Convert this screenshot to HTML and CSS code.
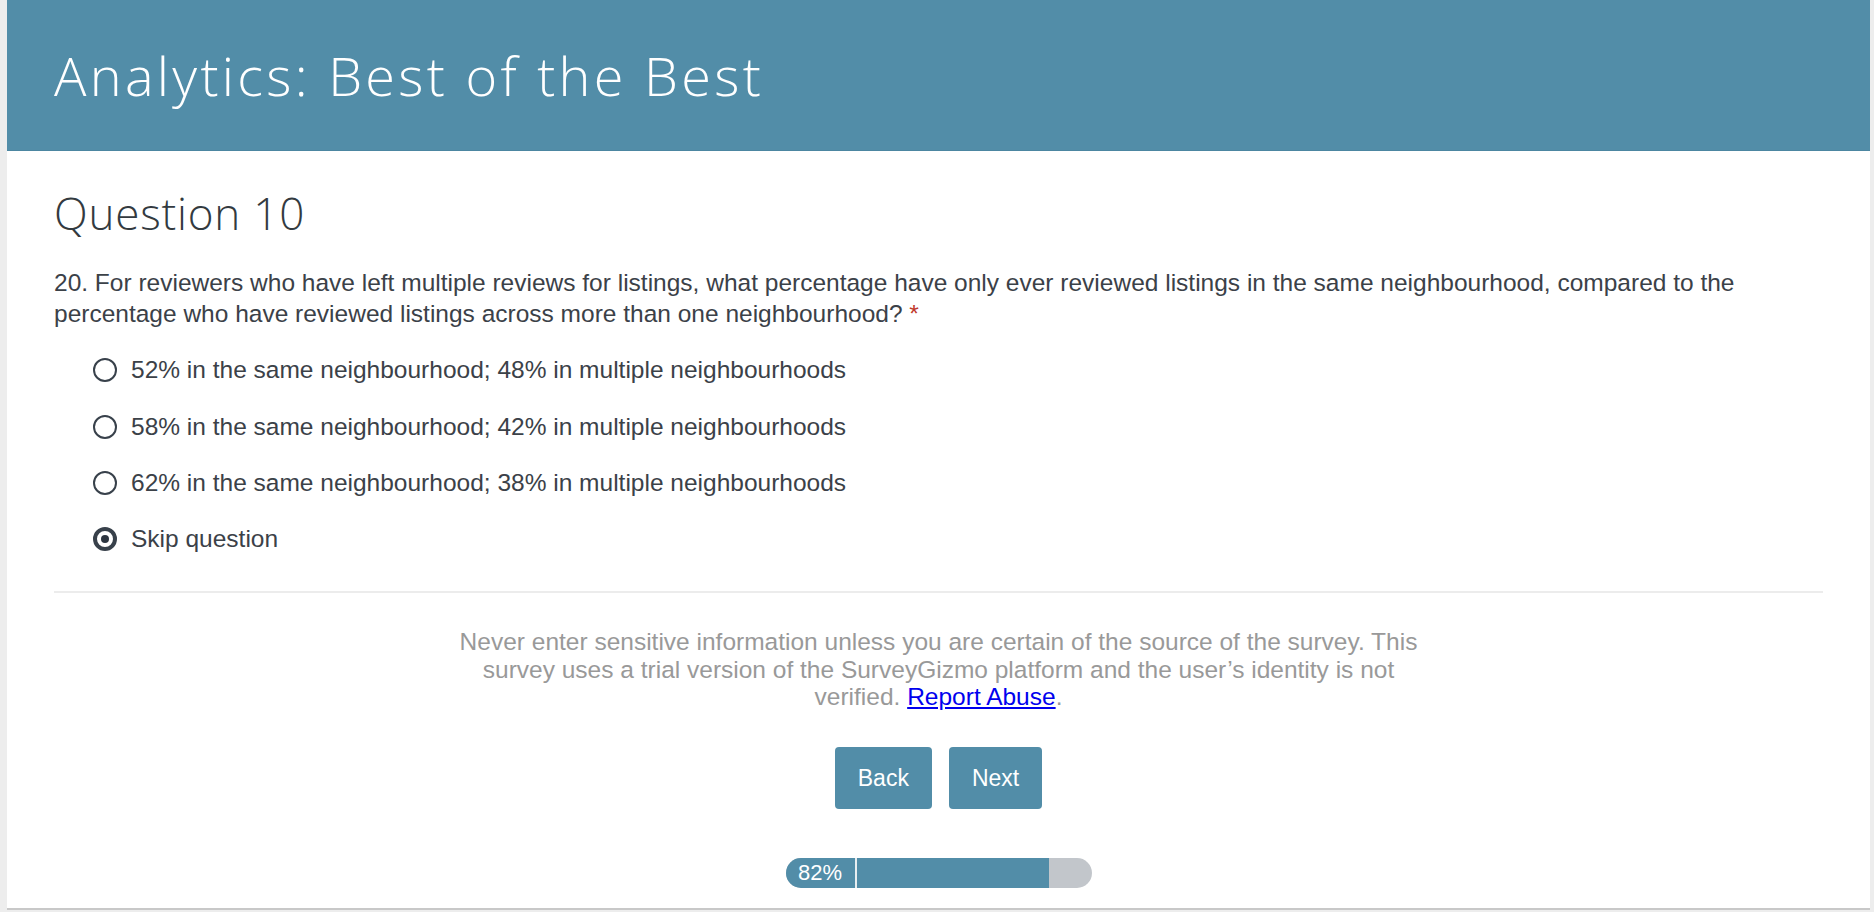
FILE: index.html
```html
<!DOCTYPE html>
<html lang="en">
<head>
<meta charset="utf-8">
<title>Analytics: Best of the Best</title>
<link rel="stylesheet" href="styles.css">
</head>
<body>
<div class="page">
  <header class="header">
    <h1 class="title">Analytics: Best of the Best</h1>
  </header>
  <main class="content">
    <h2 class="page-title">Question 10</h2>
    <p class="question">20. For reviewers who have left multiple reviews for listings, what percentage have only ever reviewed listings in the same neighbourhood, compared to the percentage who have reviewed listings across more than one neighbourhood? <span class="req">*</span></p>
    <ul class="options">
      <li class="option"><span class="radio"></span><span class="label">52% in the same neighbourhood; 48% in multiple neighbourhoods</span></li>
      <li class="option"><span class="radio"></span><span class="label">58% in the same neighbourhood; 42% in multiple neighbourhoods</span></li>
      <li class="option"><span class="radio"></span><span class="label">62% in the same neighbourhood; 38% in multiple neighbourhoods</span></li>
      <li class="option"><span class="radio checked"></span><span class="label">Skip question</span></li>
    </ul>
    <hr class="divider">
    <p class="notice">Never enter sensitive information unless you are certain of the source of the survey. This survey uses a trial version of the SurveyGizmo platform and the user’s identity is not verified. <a href="#" class="abuse">Report Abuse</a>.</p>
    <div class="actions">
      <button class="btn" type="button">Back</button>
      <button class="btn" type="button">Next</button>
    </div>
    <div class="progress">
      <span class="progress-label">82%</span>
      <span class="progress-track"><span class="progress-fill" style="width: 82%"></span></span>
    </div>
  </main>
</div>
</body>
</html>
```

FILE: styles.css
```css
html, body {
  margin: 0;
  padding: 0;
}
body {
  background: #ededed;
  font-family: "Liberation Sans", Arial, sans-serif;
  height: 912px;
  overflow: hidden;
}
.page {
  margin: 0 4px 0 7px;
  height: 910px;
  background: #fff;
  border-bottom: 2px solid #c8c8c8;
  box-sizing: border-box;
}
.header {
  height: 151px;
  background: #528da8;
  border-bottom: 1px solid #4c86a1;
  box-sizing: border-box;
  display: flex;
  align-items: center;
  padding: 0 47px;
}
.title {
  margin: 0;
  color: #fff;
  font-family: "Open Sans", sans-serif;
  font-weight: 300;
  font-size: 54px;
  line-height: 1;
  letter-spacing: 3.3px;
}
.content {
  padding: 0 47px;
}
.page-title {
  margin: 36px 0 0;
  font-family: "Open Sans", sans-serif;
  font-weight: 300;
  font-size: 44px;
  line-height: 52px;
  letter-spacing: 0.8px;
  color: #333a40;
}
.question {
  margin: 29.4px 0 0;
  font-size: 24.5px;
  line-height: 30.5px;
  color: #3b4148;
}
.req {
  color: #c0392b;
}
.options {
  list-style: none;
  margin: 12.7px 0 0;
  padding: 0 0 0 39px;
}
.option {
  display: flex;
  align-items: center;
  height: 56.33px;
  font-size: 24.5px;
  color: #3b4148;
}
.radio {
  width: 20px;
  height: 20px;
  border: 2px solid #38414b;
  border-radius: 50%;
  margin-right: 14px;
  flex: none;
  position: relative;
}
.radio.checked {
  border-width: 4px;
  width: 16px;
  height: 16px;
}
.radio.checked::after {
  content: "";
  position: absolute;
  left: 4px;
  top: 4px;
  width: 8px;
  height: 8px;
  border-radius: 50%;
  background: #2c3540;
}
.divider {
  margin: 23.7px 0 0;
  border: 0;
  border-top: 2px solid #ececec;
}
.notice {
  margin: 35px auto 0;
  max-width: 978px;
  text-align: center;
  font-size: 24.5px;
  line-height: 27.7px;
  color: #999;
}
.abuse {
  color: #0000ee;
}
.actions {
  display: flex;
  justify-content: center;
  gap: 17px;
  margin-top: 36px;
}
.btn {
  height: 62px;
  padding: 0 23px;
  border: 0;
  border-radius: 4px;
  background: #528da8;
  color: #fff;
  font-family: "Liberation Sans", Arial, sans-serif;
  font-size: 23px;
}
.progress {
  display: flex;
  width: 306px;
  height: 30px;
  margin: 49px auto 0;
  border-radius: 15px;
  overflow: hidden;
  background: #c2c6cb;
}
.progress-label {
  flex: none;
  width: 69px;
  background: #528da8;
  color: #fff;
  font-size: 22px;
  line-height: 30px;
  text-align: center;
  border-right: 2px solid #e8eef1;
}
.progress-track {
  flex: 1;
  display: block;
}
.progress-fill {
  display: block;
  height: 100%;
  background: #528da8;
}
```
